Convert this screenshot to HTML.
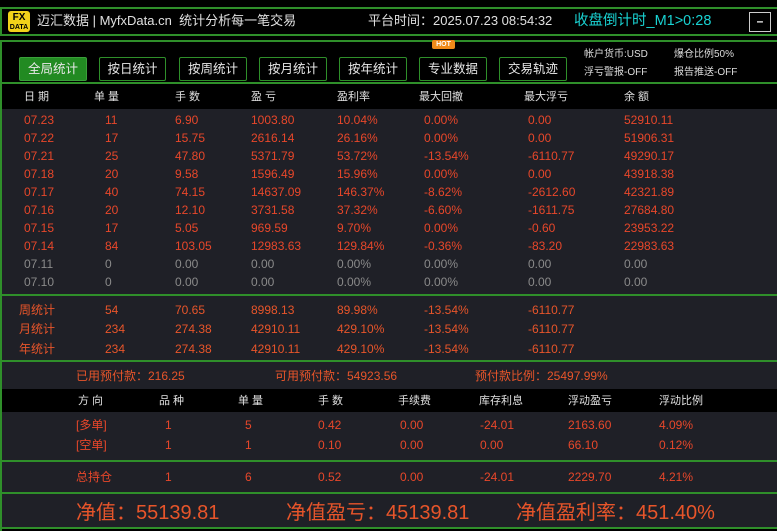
<!DOCTYPE html>
<html><head><meta charset="utf-8"><style>
*{margin:0;padding:0;box-sizing:border-box}
body{width:777px;height:531px;background:#000;position:relative;overflow:hidden;font-family:"Liberation Sans","Noto Sans CJK SC",sans-serif;font-size:12px;color:#e8472a}
.a{position:absolute;white-space:nowrap}
.g{position:absolute;left:0;width:777px;height:2px;background:#2f8f2a}
.bg{position:absolute;left:2px;width:775px;background:#1f2027}
.r{line-height:14px}
.r span{position:absolute;top:0;line-height:14px}
.btn{position:absolute;top:57px;height:24px;border:1px solid #2f8f2a;color:#e8e8e8;font-size:12.5px;text-align:center;line-height:22px;border-radius:2px}
.h{color:#e0e0e0;font-size:11px}
.gr{color:#8a8a8a}
.o{color:#e8552a}
</style></head><body>
<div class="g" style="top:7px"></div>
<div class="g" style="top:34px"></div>
<div class="g" style="top:40px"></div>
<div class="a" style="left:0;top:7px;width:2px;height:29px;background:#2f8f2a"></div>
<div class="a" style="left:0;top:40px;width:2px;height:491px;background:#2f8f2a"></div>
<div class="a" style="left:8px;top:11px;width:22px;height:21px;background:#f2d21a;border-radius:3px;color:#000;font-weight:bold;text-align:center;line-height:9px;padding-top:2px;font-size:10px">FX<br><span style="font-size:7px">DATA</span></div>
<div class="a" style="left:37px;top:13px;line-height:16px;color:#e0e0e0;font-size:13px">迈汇数据 | MyfxData.cn&nbsp; 统计分析每一笔交易</div>
<div class="a" style="left:368px;top:13px;line-height:16px;color:#e0e0e0;font-size:13px">平台时间：2025.07.23 08:54:32</div>
<div class="a" style="left:574px;top:12px;line-height:18px;color:#19d2d2;font-size:14.5px">收盘倒计时_M1&gt;0:28</div>
<div class="a" style="left:749px;top:12px;width:22px;height:20px;border:1px solid #ccc;color:#fff;text-align:center;line-height:16px;font-weight:bold">–</div>

<div class="btn" style="left:19px;width:68px;background:#228a22;border-color:#3aa03a">全局统计</div>
<div class="btn" style="left:99px;width:67px">按日统计</div>
<div class="btn" style="left:179px;width:68px">按周统计</div>
<div class="btn" style="left:259px;width:68px">按月统计</div>
<div class="btn" style="left:339px;width:68px">按年统计</div>
<div class="btn" style="left:419px;width:68px">专业数据</div>
<div class="btn" style="left:499px;width:68px">交易轨迹</div>
<div class="a" style="left:432px;top:40px;width:23px;height:9px;background:#f08a1a;color:#fff;font-size:7px;line-height:9px;text-align:center;border-radius:2px;font-weight:bold">HOT</div>
<div class="a" style="left:584px;top:48px;line-height:13px;color:#ddd;font-size:10px">帐户货币:USD</div>
<div class="a" style="left:674px;top:48px;line-height:13px;color:#ddd;font-size:10px">爆仓比例50%</div>
<div class="a" style="left:584px;top:66px;line-height:13px;color:#ddd;font-size:10px">浮亏警报-OFF</div>
<div class="a" style="left:674px;top:66px;line-height:13px;color:#ddd;font-size:10px">报告推送-OFF</div>
<div class="g" style="top:82px"></div>

<div class="r a h" style="left:0;top:90px;width:777px"><span style="left:24px">日 期</span><span style="left:94px">单 量</span><span style="left:175px">手 数</span><span style="left:251px">盈 亏</span><span style="left:337px">盈利率</span><span style="left:419px">最大回撤</span><span style="left:524px">最大浮亏</span><span style="left:624px">余 额</span></div>
<div class="bg" style="top:109px;height:185px"></div>
<div class="g" style="top:294px"></div>
<div class="bg" style="top:296px;height:64px"></div>
<div class="g" style="top:360px"></div>
<div class="bg" style="top:362px;height:27px"></div>
<div class="bg" style="top:412px;height:48px"></div>
<div class="g" style="top:460px"></div>
<div class="bg" style="top:462px;height:30px"></div>
<div class="g" style="top:492px"></div>
<div class="bg" style="top:494px;height:33px"></div>
<div class="g" style="top:527px"></div>

<div class="r a" style="left:0;top:113px;width:777px"><span style="left:24px">07.23</span><span style="left:105px">11</span><span style="left:175px">6.90</span><span style="left:251px">1003.80</span><span style="left:337px">10.04%</span><span style="left:424px">0.00%</span><span style="left:528px">0.00</span><span style="left:624px">52910.11</span></div>
<div class="r a" style="left:0;top:131px;width:777px"><span style="left:24px">07.22</span><span style="left:105px">17</span><span style="left:175px">15.75</span><span style="left:251px">2616.14</span><span style="left:337px">26.16%</span><span style="left:424px">0.00%</span><span style="left:528px">0.00</span><span style="left:624px">51906.31</span></div>
<div class="r a" style="left:0;top:149px;width:777px"><span style="left:24px">07.21</span><span style="left:105px">25</span><span style="left:175px">47.80</span><span style="left:251px">5371.79</span><span style="left:337px">53.72%</span><span style="left:424px">-13.54%</span><span style="left:528px">-6110.77</span><span style="left:624px">49290.17</span></div>
<div class="r a" style="left:0;top:167px;width:777px"><span style="left:24px">07.18</span><span style="left:105px">20</span><span style="left:175px">9.58</span><span style="left:251px">1596.49</span><span style="left:337px">15.96%</span><span style="left:424px">0.00%</span><span style="left:528px">0.00</span><span style="left:624px">43918.38</span></div>
<div class="r a" style="left:0;top:185px;width:777px"><span style="left:24px">07.17</span><span style="left:105px">40</span><span style="left:175px">74.15</span><span style="left:251px">14637.09</span><span style="left:337px">146.37%</span><span style="left:424px">-8.62%</span><span style="left:528px">-2612.60</span><span style="left:624px">42321.89</span></div>
<div class="r a" style="left:0;top:203px;width:777px"><span style="left:24px">07.16</span><span style="left:105px">20</span><span style="left:175px">12.10</span><span style="left:251px">3731.58</span><span style="left:337px">37.32%</span><span style="left:424px">-6.60%</span><span style="left:528px">-1611.75</span><span style="left:624px">27684.80</span></div>
<div class="r a" style="left:0;top:221px;width:777px"><span style="left:24px">07.15</span><span style="left:105px">17</span><span style="left:175px">5.05</span><span style="left:251px">969.59</span><span style="left:337px">9.70%</span><span style="left:424px">0.00%</span><span style="left:528px">-0.60</span><span style="left:624px">23953.22</span></div>
<div class="r a" style="left:0;top:239px;width:777px"><span style="left:24px">07.14</span><span style="left:105px">84</span><span style="left:175px">103.05</span><span style="left:251px">12983.63</span><span style="left:337px">129.84%</span><span style="left:424px">-0.36%</span><span style="left:528px">-83.20</span><span style="left:624px">22983.63</span></div>
<div class="r a gr" style="left:0;top:257px;width:777px"><span style="left:24px">07.11</span><span style="left:105px">0</span><span style="left:175px">0.00</span><span style="left:251px">0.00</span><span style="left:337px">0.00%</span><span style="left:424px">0.00%</span><span style="left:528px">0.00</span><span style="left:624px">0.00</span></div>
<div class="r a gr" style="left:0;top:275px;width:777px"><span style="left:24px">07.10</span><span style="left:105px">0</span><span style="left:175px">0.00</span><span style="left:251px">0.00</span><span style="left:337px">0.00%</span><span style="left:424px">0.00%</span><span style="left:528px">0.00</span><span style="left:624px">0.00</span></div>

<div class="r a o" style="left:0;top:303px;width:777px"><span style="left:19px">周统计</span><span style="left:105px">54</span><span style="left:175px">70.65</span><span style="left:251px">8998.13</span><span style="left:337px">89.98%</span><span style="left:424px">-13.54%</span><span style="left:528px">-6110.77</span></div>
<div class="r a o" style="left:0;top:322px;width:777px"><span style="left:19px">月统计</span><span style="left:105px">234</span><span style="left:175px">274.38</span><span style="left:251px">42910.11</span><span style="left:337px">429.10%</span><span style="left:424px">-13.54%</span><span style="left:528px">-6110.77</span></div>
<div class="r a o" style="left:0;top:342px;width:777px"><span style="left:19px">年统计</span><span style="left:105px">234</span><span style="left:175px">274.38</span><span style="left:251px">42910.11</span><span style="left:337px">429.10%</span><span style="left:424px">-13.54%</span><span style="left:528px">-6110.77</span></div>

<div class="r a o" style="left:0;top:369px;width:777px"><span style="left:76px">已用预付款：216.25</span><span style="left:275px">可用预付款：54923.56</span><span style="left:475px">预付款比例：25497.99%</span></div>
<div class="r a h" style="left:0;top:394px;width:777px"><span style="left:78px">方 向</span><span style="left:159px">品 种</span><span style="left:238px">单 量</span><span style="left:318px">手 数</span><span style="left:398px">手续费</span><span style="left:479px">库存利息</span><span style="left:568px">浮动盈亏</span><span style="left:659px">浮动比例</span></div>
<div class="r a" style="left:0;top:418px;width:777px"><span style="left:76px">[多单]</span><span style="left:165px">1</span><span style="left:245px">5</span><span style="left:318px">0.42</span><span style="left:400px">0.00</span><span style="left:480px">-24.01</span><span style="left:568px">2163.60</span><span style="left:659px">4.09%</span></div>
<div class="r a" style="left:0;top:438px;width:777px"><span style="left:76px">[空单]</span><span style="left:165px">1</span><span style="left:245px">1</span><span style="left:318px">0.10</span><span style="left:400px">0.00</span><span style="left:480px">0.00</span><span style="left:568px">66.10</span><span style="left:659px">0.12%</span></div>
<div class="r a" style="left:0;top:470px;width:777px"><span style="left:76px">总持仓</span><span style="left:165px">1</span><span style="left:245px">6</span><span style="left:318px">0.52</span><span style="left:400px">0.00</span><span style="left:480px">-24.01</span><span style="left:568px">2229.70</span><span style="left:659px">4.21%</span></div>
<div class="a o" style="left:0;top:500px;width:777px;font-size:20px;line-height:26px;height:26px"><span class="a" style="left:76px;top:0">净值：55139.81</span><span class="a" style="left:286px;top:0">净值盈亏：45139.81</span><span class="a" style="left:516px;top:0">净值盈利率：451.40%</span></div>
</body></html>
